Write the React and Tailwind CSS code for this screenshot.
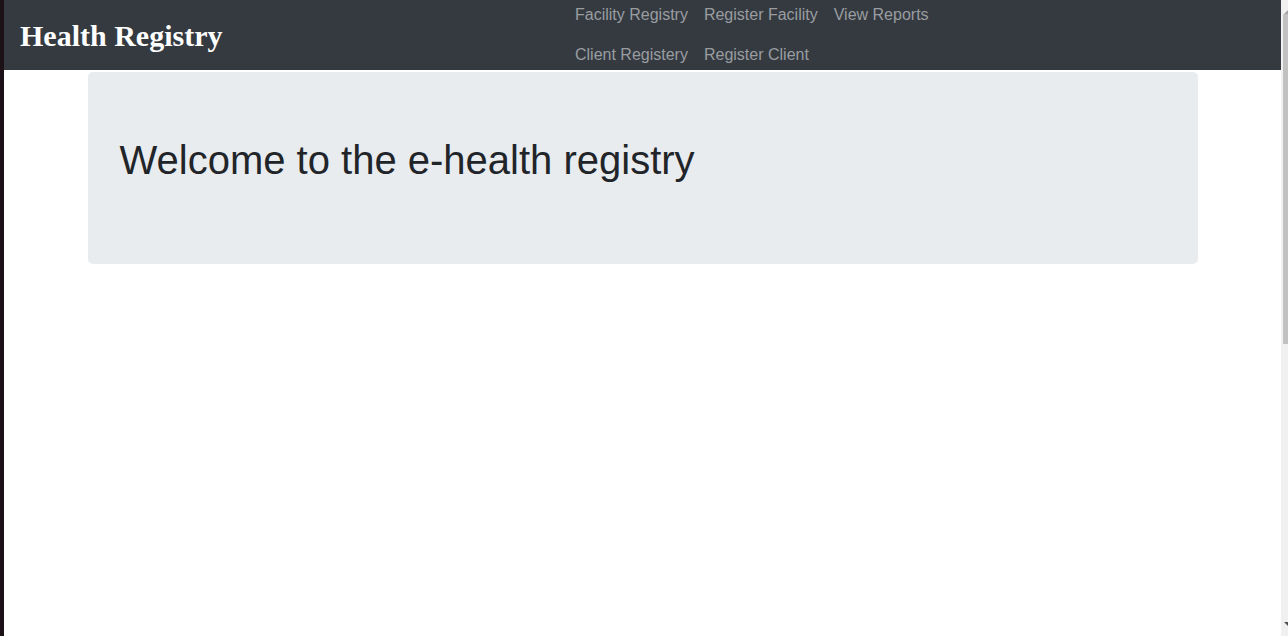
const navRows = [
  ["Facility Registry", "Register Facility", "View Reports"],
  ["Client Registery", "Register Client"],
];

const App = () => {
  return (
    <div className="flex h-[636px] w-full overflow-hidden bg-white">
      {/* window edge */}
      <div className="w-[4px] shrink-0 bg-[#1c1117]" />

      <div className="flex min-w-0 flex-1 flex-col">
        <nav className="flex h-[70px] shrink-0 bg-[#343a40]">
          <div className="flex w-[555px] items-center pl-4 pt-[1px]">
            <span className="font-['Liberation_Serif',serif] text-[30px] font-bold leading-none text-white">
              Health Registry
            </span>
          </div>
          <div className="flex flex-col gap-[15px] pt-[2px] pl-[16px]">
            {navRows.map((row, i) => (
              <ul key={i} className="flex gap-4">
                {row.map((link) => (
                  <li key={link}>
                    <a className="font-['Liberation_Sans',Arial,sans-serif] text-[16px] leading-6 text-[#9a9da0]">
                      {link}
                    </a>
                  </li>
                ))}
              </ul>
            ))}
          </div>
        </nav>

        <main className="flex justify-center pt-[2px]">
          <div className="h-[192px] w-[1110px] rounded-[5px] bg-[#e9ecef] px-8 pt-16">
            <h1 className="font-['Liberation_Sans',Arial,sans-serif] text-[40px] leading-[48px] text-[#212529]">
              Welcome to the e-health registry
            </h1>
          </div>
        </main>
      </div>

      {/* scrollbar */}
      <div className="flex w-[7px] shrink-0 flex-col bg-[#f0f0f0]">
        <div className="flex h-[14px] items-end justify-end">
          <div className="h-0 w-0 border-b-[4px] border-l-[4px] border-b-[#a3a3a3] border-l-transparent" />
        </div>
        <div className="ml-[2px] h-[330px] bg-[#c1c1c1]" />
        <div className="flex-1" />
        <div className="flex h-[14px] items-start justify-end">
          <div className="h-0 w-0 border-t-[4px] border-l-[4px] border-t-[#505050] border-l-transparent" />
        </div>
      </div>
    </div>
  );
};

export default App;
